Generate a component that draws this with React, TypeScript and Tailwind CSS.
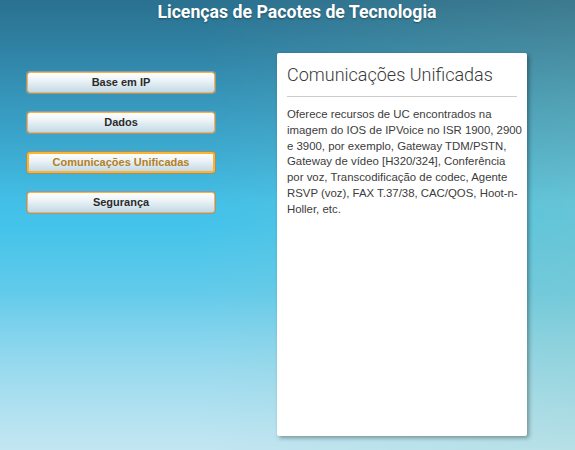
import React, { useState } from 'react';

const items = [
  { id: 'ip', label: 'Base em IP' },
  { id: 'dados', label: 'Dados' },
  { id: 'uc', label: 'Comunicações Unificadas' },
  { id: 'seg', label: 'Segurança' },
];

const details: Record<string, string> = {
  ip: 'Recursos básicos de roteamento e switching incluídos na imagem IP Base do IOS.',
  dados: 'Recursos de dados como MPLS, BFD, IP SLA e outros recursos avançados de rede.',
  uc: 'Oferece recursos de UC encontrados na imagem do IOS de IPVoice no ISR 1900, 2900 e 3900, por exemplo, Gateway TDM/PSTN, Gateway de vídeo [H320/324], Conferência por voz, Transcodificação de codec, Agente RSVP (voz), FAX T.37/38, CAC/QOS, Hoot-n-Holler, etc.',
  seg: 'Recursos de segurança como firewall do IOS, IPS, VPN e outros.',
};

export default function App() {
  const [active, setActive] = useState('uc');
  const current = items.find((i) => i.id === active)!;

  return (
    <div
      className="relative w-[575px] h-[450px] overflow-hidden bg-[linear-gradient(180deg,rgba(225,242,247,0)_65%,rgba(225,242,247,0.45)_100%),linear-gradient(180deg,rgba(30,72,92,0.55)_0%,rgba(30,72,92,0.25)_22%,rgba(30,72,92,0)_45%),linear-gradient(90deg,rgba(130,205,205,0)_35%,rgba(130,200,200,0.55)_100%),linear-gradient(180deg,#3aa2cf_0%,#44c3ea_50%,#a9dced_100%)]"
      style={{ fontFamily: 'Roboto, "Liberation Sans", sans-serif' }}
    >
      {/* Header */}
      <div className="h-[53px] pl-[19px] pt-[1px] text-center">
        <h1 className="text-[17.7px] leading-[22px] font-bold text-white [text-shadow:0_1px_2px_rgba(0,0,0,0.35)]">
          Licenças de Pacotes de Tecnologia
        </h1>
      </div>

      <div className="flex pl-[27px] gap-[62px]">
        {/* Menu */}
        <div className="w-[188px] mt-[19px] flex flex-col gap-[19px]">
          {items.map((item) => {
            const isActive = item.id === active;
            return (
              <button
                key={item.id}
                onClick={() => setActive(item.id)}
                className={`h-[21px] w-full rounded-[3px] text-[11px] font-bold leading-none font-['Liberation_Sans',Arial,sans-serif] bg-[linear-gradient(180deg,#ffffff_0%,#eef5f8_35%,#c4dae5_100%)] ${
                  isActive
                    ? 'border-2 border-[#fab431] text-[#b5801f] shadow-[0_0_0_1px_#9c8f72]'
                    : 'border border-[#f5b44a] text-[#2b2b2b] shadow-[0_0_0_1px_#8d9aa3]'
                }`}
              >
                {item.label}
              </button>
            );
          })}
        </div>

        {/* Detail panel */}
        <div className="w-[250px] h-[383px] bg-white rounded-[2px] shadow-[2px_2px_4px_rgba(0,0,0,0.35)] pl-[10px] pr-[4px] pt-[10px]">
          <h2 className="text-[18px] leading-[24px] font-light text-[#3a3a3a]">{current.label}</h2>
          <div className="mt-[9px] mr-[6px] h-px bg-[#cccccc]" />
          <p className="mt-[10px] text-[11.4px] leading-[15.8px] text-[#3c3c3c] font-['Liberation_Sans',Arial,sans-serif]">
            {details[active]}
          </p>
        </div>
      </div>
    </div>
  );
}
